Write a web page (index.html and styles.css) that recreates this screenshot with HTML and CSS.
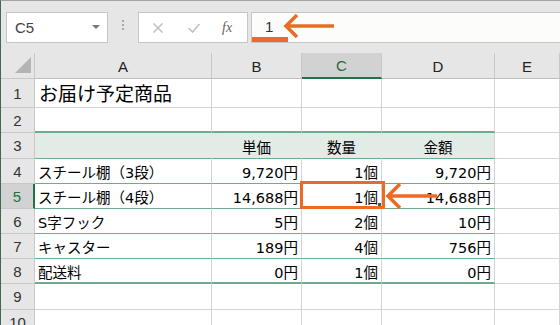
FILE: index.html
```html
<!doctype html>
<html>
	<head>
		<meta charset="utf-8">
		<link rel="stylesheet" href="styles.css">
	</head>
	<body>
		<div class="app">
			<div class="fbar">
				<div class="namebox">
					<span class="name">C5</span>
					<span class="caret"></span>
				</div>
				<div class="grip">
					<svg width="3" height="12" viewBox="0 0 3 12"><rect x="0" y="0" width="2" height="2"/><rect x="0" y="4" width="2" height="2"/><rect x="0" y="8" width="2" height="2"/></svg>
				</div>
				<div class="fbtns">
					<svg class="ico" width="12" height="12" viewBox="0 0 12 12"><path d="M1.5 1.5 L10.5 10.5 M10.5 1.5 L1.5 10.5"/></svg>
					<svg class="ico" width="14" height="12" viewBox="0 0 14 12"><path d="M1.5 6 L5.5 10 L12.5 2"/></svg>
					<span class="fx">fx</span>
				</div>
				<div class="finput">
					<span class="fval">1</span>
				</div>
			</div>

			<div class="sheet">
				<div class="grid">
					<!-- column headers -->
					<div class="corner"><span class="tri"></span></div>
					<div class="ch">A</div>
					<div class="ch">B</div>
					<div class="ch sel">C</div>
					<div class="ch">D</div>
					<div class="ch">E</div>

					<!-- row 1 -->
					<div class="rh">1</div>
					<div class="c title">お届け予定商品</div>
					<div class="c"></div>
					<div class="c"></div>
					<div class="c"></div>
					<div class="c"></div>

					<!-- row 2 -->
					<div class="rh">2</div>
					<div class="c above"></div>
					<div class="c above"></div>
					<div class="c above"></div>
					<div class="c above"></div>
					<div class="c"></div>

					<!-- row 3 -->
					<div class="rh">3</div>
					<div class="c th"></div>
					<div class="c th center">単価</div>
					<div class="c th center">数量</div>
					<div class="c th th-end center">金額</div>
					<div class="c"></div>

					<!-- row 4 -->
					<div class="rh">4</div>
					<div class="c tb">スチール棚（3段）</div>
					<div class="c tb num">9,720円</div>
					<div class="c tb num">1個</div>
					<div class="c tb num">9,720円</div>
					<div class="c"></div>

					<!-- row 5 -->
					<div class="rh sel">5</div>
					<div class="c tb">スチール棚（4段）</div>
					<div class="c tb num">14,688円</div>
					<div class="c tb num">1個</div>
					<div class="c tb num">14,688円</div>
					<div class="c"></div>

					<!-- row 6 -->
					<div class="rh">6</div>
					<div class="c tb">S字フック</div>
					<div class="c tb num">5円</div>
					<div class="c tb num">2個</div>
					<div class="c tb num">10円</div>
					<div class="c"></div>

					<!-- row 7 -->
					<div class="rh">7</div>
					<div class="c tb">キャスター</div>
					<div class="c tb num">189円</div>
					<div class="c tb num">4個</div>
					<div class="c tb num">756円</div>
					<div class="c"></div>

					<!-- row 8 -->
					<div class="rh">8</div>
					<div class="c tb last">配送料</div>
					<div class="c tb last num">0円</div>
					<div class="c tb last num">1個</div>
					<div class="c tb last num">0円</div>
					<div class="c"></div>

					<!-- row 9 -->
					<div class="rh">9</div>
					<div class="c"></div>
					<div class="c"></div>
					<div class="c"></div>
					<div class="c"></div>
					<div class="c"></div>

					<!-- row 10 -->
					<div class="rh">10</div>
					<div class="c"></div>
					<div class="c"></div>
					<div class="c"></div>
					<div class="c"></div>
					<div class="c"></div>
				</div>

				<div class="cursor"><span class="handle"></span></div>
			</div>

			<!-- annotation arrows -->
			<svg class="notes" width="560" height="325" viewBox="1 1 560 325">
				<rect x="252" y="37" width="36" height="5"/>
				<path d="M297 15 L286 26 L297 37 M287 26 L334 26"/>
				<path d="M400 184 L388 196 L400 208 M389 196 L437 196"/>
			</svg>
		</div>
	</body>
</html>
```

FILE: styles.css
```css
html, body {
	margin: 0;
	padding: 0;
	background: #fff;
}

.app {
	position: relative;
	width: 560px;
	height: 325px;
	box-sizing: border-box;
	overflow: hidden;
	border-top: 1px solid #a3a3a3;
	border-left: 1px solid #3f6a52;
	font-family: "DejaVu Sans", "Noto Sans CJK JP", sans-serif;
}

/* formula bar */
.fbar {
	display: flex;
	align-items: stretch;
	height: 52px;
	box-sizing: border-box;
	padding: 11px 0 10px 5px;
	background: #e6e6e6;
}

.namebox {
	width: 102px;
	box-sizing: border-box;
	display: flex;
	align-items: center;
	justify-content: space-between;
	padding: 0 7px 0 8px;
	background: #fff;
	border: 1px solid #c6c6c6;
}
	.name {
		font-family: "Liberation Sans", sans-serif;
		font-size: 15px;
		color: #444;
	}
	.caret {
		width: 0;
		height: 0;
		border-left: 4px solid transparent;
		border-right: 4px solid transparent;
		border-top: 4px solid #777;
		margin-top: -2px;
	}

.grip {
	width: 30px;
	display: flex;
	align-items: center;
	justify-content: center;
}
	.grip svg {
		fill: #a8a8a8;
		margin-top: -3px;
	}

.fbtns {
	width: 110px;
	box-sizing: border-box;
	display: flex;
	align-items: center;
	padding: 0 0 0 13px;
	background: #fff;
	border: 1px solid #c6c6c6;
}
	.ico {
		fill: none;
		stroke: #c2c2c2;
		stroke-width: 1.6;
	}
	.ico + .ico {
		margin-left: 23px;
	}
	.fx {
		margin-left: 21px;
		font-family: "Liberation Serif", serif;
		font-style: italic;
		font-size: 14px;
		color: #666;
	}

.finput {
	flex: 1;
	margin-left: 3px;
	margin-right: -1px;
	display: flex;
	align-items: center;
	padding-left: 13px;
	background: #fcfdfb;
	border: 1px solid #c6c6c6;
}
	.fval {
		font-family: "Liberation Sans", sans-serif;
		font-size: 15px;
		color: #333;
		margin-top: -2px;
	}

/* sheet */
.sheet {
	position: relative;
}

.grid {
	display: grid;
	grid-template-columns: 34px 177px 90px 80px 113px 1fr;
	grid-template-rows: 26px 29px 25px 26px 25px 25px 25px 25px 25px 26px 26px;
}

.corner,
.ch,
.rh {
	box-sizing: border-box;
	display: flex;
	align-items: center;
	justify-content: center;
	background: #e6e6e6;
	font-family: "Liberation Sans", sans-serif;
	font-size: 15px;
	color: #222;
	border-right: 1px solid #c8c8c8;
	border-bottom: 1px solid #c8c8c8;
}
.corner {
	align-items: flex-end;
	justify-content: flex-end;
	padding: 0 3px 5px 0;
}
	.tri {
		width: 0;
		height: 0;
		border-left: 16px solid transparent;
		border-bottom: 16px solid #b4b4b4;
	}
.ch {
	border-bottom-color: #bdbdbd;
	padding-top: 1px;
}
.ch.sel {
	background: #d2d2d2;
	color: #1e6a42;
	border-bottom: 2px solid #217346;
}
.rh {
	color: #333;
}
.rh.sel {
	background: #d2d2d2;
	color: #217346;
	border-right: 2px solid #217346;
}

.c {
	box-sizing: border-box;
	display: flex;
	align-items: center;
	padding: 1px 3px 0 3px;
	font-size: 14.5px;
	color: #000;
	white-space: nowrap;
	border-right: 1px solid #d4d4d4;
	border-bottom: 1px solid #d4d4d4;
}
.title {
	font-size: 19px;
	padding-left: 4px;
	padding-bottom: 3px;
}
.num {
	justify-content: flex-end;
}
.center {
	justify-content: center;
}
.above {
	border-bottom: 2px solid #6fac8f;
}
.th {
	background: #e2ece6;
	border-right-color: #e2ece6;
	border-bottom: 1px solid #6fac8f;
}
.th-end {
	border-right-color: #d4d4d4;
}
.tb {
	border-bottom: 1px solid #6fac8f;
}
.tb.last {
	border-bottom: 2px solid #6fac8f;
}

/* active cell, drawn over the grid */
.cursor {
	position: absolute;
	left: 299px;
	top: 128px;
	width: 85px;
	height: 28px;
	box-sizing: border-box;
	border: 3px solid #ee6a24;
}
	.handle {
		position: absolute;
		right: 1px;
		bottom: 0;
		width: 3px;
		height: 3px;
		background: #217346;
	}

.notes {
	position: absolute;
	left: 0;
	top: 0;
	fill: #ee6a24;
	pointer-events: none;
}
	.notes path {
		fill: none;
		stroke: #ee6a24;
		stroke-width: 3.5;
	}
```
